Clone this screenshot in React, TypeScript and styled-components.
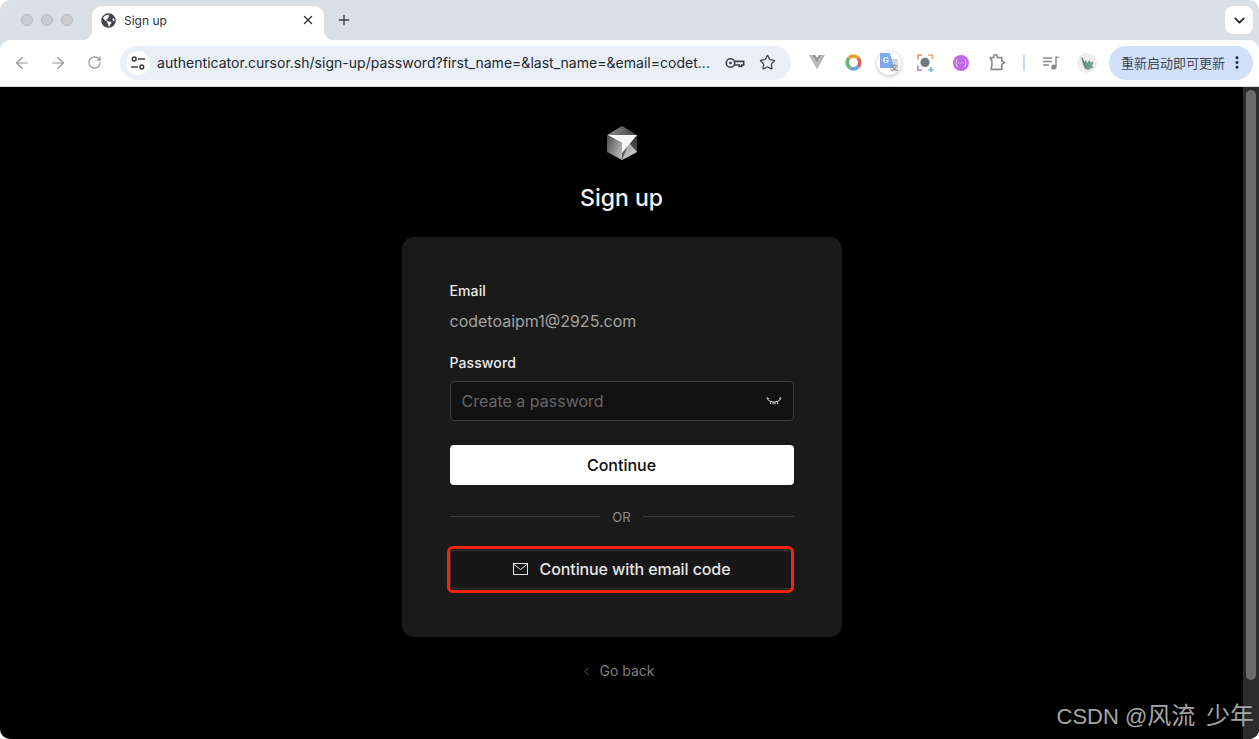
import * as React from 'react';

import styled, { createGlobalStyle } from 'styled-components';
import { ArrowLeft, ArrowRight, ChevronDown, ChevronLeft, EllipsisVertical, Plus, RotateCw, Star, X } from 'lucide-react';
import { FaGlobeAmericas } from 'react-icons/fa';

const GlobalStyle = createGlobalStyle`
  html, body {
    margin: 0;
    padding: 0;
    background-color: #fff;
  }

  body {
    font-family: Inter, "Liberation Sans", "Noto Sans CJK SC", sans-serif;
  }
`;

const Frame = styled.div`
  display: flex;
  flex-direction: column;
  position: relative;
  width: 1259px;
  height: 739px;
  overflow: hidden;
  border-radius: 10px;
  background-color: #d9e0e8;
`;

const TabStrip = styled.div`
  display: flex;
  align-items: flex-end;
  flex: 0 0 40px;
  box-sizing: border-box;
  padding: 0 6px 0 21px;
`;

const Dots = styled.div`
  display: flex;
  gap: 8px;
  align-self: center;
  margin-right: 19px;
`;

const Dot = styled.span`
  width: 12px;
  height: 12px;
  box-sizing: border-box;
  border: 1px solid #b5babf;
  border-radius: 50%;
  background-color: #c9cdd2;
`;

const Tab = styled.div`
  display: flex;
  align-items: center;
  position: relative;
  width: 232px;
  height: 34px;
  box-sizing: border-box;
  padding: 0 9px 6px;
  border-radius: 10px 10px 0 0;
  background-color: #fff;
  color: #3c4043;

  &::before,
  &::after {
    content: '';
    position: absolute;
    bottom: 0;
    width: 8px;
    height: 8px;
  }

  &::before {
    left: -8px;
    background: radial-gradient(circle at 0 0, transparent 7.5px, #fff 8px);
  }

  &::after {
    right: -8px;
    background: radial-gradient(circle at 100% 0, transparent 7.5px, #fff 8px);
  }
`;

const TabTitle = styled.span`
  flex: 1;
  margin-left: 8px;
  font-size: 12px;
  color: #2f3235;
`;

const NewTab = styled.div`
  display: flex;
  align-self: center;
  margin-left: 12px;
  color: #3c4043;
`;

const TabMenu = styled.div`
  display: flex;
  justify-content: center;
  align-items: center;
  align-self: flex-start;
  width: 28px;
  height: 28px;
  margin: 6px 0 0 auto;
  border-radius: 8px;
  background-color: #fff;
  color: #1f2328;
`;

const Toolbar = styled.div`
  display: flex;
  align-items: center;
  flex: 0 0 47px;
  box-sizing: border-box;
  padding: 0 6px 1px 4px;
  border-radius: 10px 10px 0 0;
  border-bottom: 1px solid #d5d8dc;
  background-color: #fff;
`;

const Slot = styled.div`
  display: flex;
  justify-content: center;
  align-items: center;
  width: 36px;
  height: 34px;
  color: #8f959b;
`;

const Omnibox = styled.div`
  display: flex;
  align-items: center;
  width: 671px;
  height: 34px;
  box-sizing: border-box;
  margin: 0 8px;
  padding: 0 15px 0 6px;
  border-radius: 17px;
  background-color: #e8eff9;
  color: #3c4043;
`;

const TuneButton = styled.div`
  display: flex;
  justify-content: center;
  align-items: center;
  width: 24px;
  height: 24px;
  border-radius: 50%;
  background-color: #fff;
`;

const Url = styled.span`
  flex: 1;
  margin-left: 7px;
  font-size: 14px;
  letter-spacing: 0.02px;
  color: #22262a;
  white-space: nowrap;
`;

const OmniAction = styled.div`
  display: flex;
  margin-left: 14px;
  color: #3c4043;
`;

const ToolDivider = styled.span`
  width: 2px;
  height: 16px;
  margin: 0 8px 0 8px;
  background-color: #c6d9f6;
`;

const UpdatePill = styled.div`
  display: flex;
  align-items: center;
  width: 144px;
  height: 34px;
  box-sizing: border-box;
  margin-left: 4px;
  padding: 0 8px 0 12px;
  border-radius: 17px;
  background-color: #d0e0fb;
  color: #444a52;
  font-family: "Noto Sans CJK SC", sans-serif;
  font-size: 13px;
  white-space: nowrap;

  svg {
    margin-left: 4px;
    color: #0f2a4a;
  }
`;

const Viewport = styled.div`
  display: flex;
  flex: 1;
  min-height: 0;
  background-color: #000;
`;

const Main = styled.main`
  display: flex;
  flex: 1;
  flex-direction: column;
  align-items: center;
  padding-top: 39px;
`;

const Scrollbar = styled.div`
  flex: 0 0 16px;
  box-sizing: border-box;
  padding: 3px 3px 59px 3px;
  background-color: #2b2b2b;
`;

const ScrollThumb = styled.div`
  height: 100%;
  border-radius: 5px;
  background-color: #6b6b6b;
`;

const Title = styled.h1`
  margin: 22px 0 23px;
  font-size: 23px;
  font-weight: 500;
  line-height: 32px;
  color: #f4f4f4;
`;

const Card = styled.section`
  display: flex;
  flex-direction: column;
  width: 440px;
  height: 400px;
  box-sizing: border-box;
  padding: 44px 48px 0;
  border-radius: 12px;
  background-color: #1a1a1a;
`;

const Label = styled.div`
  font-size: 14px;
  font-weight: 500;
  letter-spacing: 0.1px;
  line-height: 20px;
  color: #ededed;
`;

const EmailValue = styled.div`
  margin: 8px 0 20px;
  font-size: 16px;
  line-height: 24px;
  color: #a3a3a3;
`;

const InputBox = styled.div`
  display: flex;
  align-items: center;
  justify-content: space-between;
  height: 40px;
  box-sizing: border-box;
  margin-top: 8px;
  padding: 0 11px;
  border: 1px solid #3d3d3d;
  border-radius: 4px;
  background-color: #121212;
`;

const Placeholder = styled.span`
  font-size: 16px;
  color: #666;
`;

const PrimaryButton = styled.div`
  display: flex;
  justify-content: center;
  align-items: center;
  height: 40px;
  margin-top: 24px;
  border-radius: 4px;
  background-color: #fff;
  font-size: 16px;
  font-weight: 500;
  color: #0a0a0a;
`;

const OrRow = styled.div`
  display: flex;
  align-items: center;
  gap: 12px;
  height: 20px;
  margin: 22px 0 23px;
  font-size: 13px;
  color: #8c8c8c;

  &::before,
  &::after {
    content: '';
    flex: 1;
    height: 1px;
    margin-bottom: 2px;
    background-color: #3a3a3a;
  }
`;

const SecondaryButton = styled.div`
  display: flex;
  justify-content: center;
  align-items: center;
  gap: 12px;
  position: relative;
  height: 39px;
  box-sizing: border-box;
  padding-bottom: 1px;
  border: 1px solid #333;
  border-radius: 4px;
  background-color: #171717;
  font-size: 16px;
  font-weight: 500;
  letter-spacing: -0.1px;
  color: #e4e4e4;
`;

const RedMark = styled.span`
  position: absolute;
  top: -5px;
  right: -1px;
  bottom: -5px;
  left: -4px;
  border: 3px solid #f5230c;
  border-radius: 6px;
`;

const BackLink = styled.div`
  display: flex;
  align-items: center;
  gap: 6px;
  margin-top: 24px;
  padding-right: 8px;
  font-size: 14px;
  line-height: 20px;
  color: #7d7d7d;
`;

const Watermark = styled.div`
  position: absolute;
  right: 5px;
  bottom: 8px;
  font-family: "Liberation Sans", "Noto Sans CJK SC", sans-serif;
  font-size: 22px;
  line-height: 28px;
  color: #a6a6a6;
  white-space: nowrap;
`;

const WatermarkName = styled.span`
  font-size: 24px;
  word-spacing: 4px;
`;

const TuneIcon = () => (
  <svg width="16" height="16" viewBox="0 0 16 16" fill="none" stroke="#3c4043" strokeWidth="1.5">
    <circle cx="4.2" cy="4" r="1.9" />
    <path d="M8 4h7" />
    <path d="M1 12h7" />
    <circle cx="11.8" cy="12" r="1.9" />
  </svg>
);

const KeyIcon = () => (
  <svg width="20" height="12" viewBox="0 0 20 12" fill="none" stroke="#3c4043" strokeWidth="1.6">
    <circle cx="5.5" cy="6" r="4.2" />
    <circle cx="5.5" cy="6" r="1" fill="#3c4043" strokeWidth="0.8" />
    <path d="M9.7 4.4h9v3.6h-2v1.4h-2.4V8H9.7" />
  </svg>
);

const VueIcon = () => (
  <svg width="16" height="15" viewBox="0 0 16 15">
    <path d="M0 0h3.6L8 7.6 12.4 0H16L8 14.5z" fill="#b6b8ba" />
    <path d="M3.6 0h2.6L8 3.1 9.8 0h2.6L8 7.6z" fill="#8f9193" />
  </svg>
);

const RingIcon = () => (
  <svg width="17" height="17" viewBox="0 0 17 17" fill="none" strokeWidth="3.6">
    <path d="M4 4A6.4 6.4 0 0 1 13 4" stroke="#e8a33d" />
    <path d="M13 4A6.4 6.4 0 0 1 13 13" stroke="#d9695f" />
    <path d="M13 13A6.4 6.4 0 0 1 5.4 14" stroke="#6aa5e8" />
    <path d="M5.4 14A6.4 6.4 0 0 1 4 4" stroke="#68b36f" />
  </svg>
);

const TranslateIcon = () => (
  <svg width="26" height="26" viewBox="0 0 26 26" style={{ filter: 'drop-shadow(0 1px 2px rgba(0,0,0,0.28))' }}>
    <circle cx="13" cy="13" r="12" fill="#fff" />
    <path d="M12 9h10v12H14z" fill="#d5d7d9" />
    <path d="M4 3h10l4 15H4z" fill="#7fa8ef" />
    <text x="7" y="13" fontSize="8" fontWeight="700" fill="#fff" fontFamily="Inter, sans-serif">G</text>
    <text x="15" y="20" fontSize="7" fill="#777" fontFamily="'Noto Sans CJK SC', sans-serif">文</text>
  </svg>
);

const LensIcon = () => (
  <svg width="17" height="18" viewBox="0 0 17 18" fill="none" strokeWidth="1.8">
    <path d="M.9 5.5V1.2H5" stroke="#e99a8f" />
    <path d="M11 1.2h4.4V5.5" stroke="#eeb27c" />
    <path d="M.9 11.5v4.6H5" stroke="#c58be0" />
    <path d="M11.5 15.8h5M14 13v5" stroke="#6fc2e6" />
    <circle cx="8" cy="8.4" r="4.6" fill="#73787e" />
  </svg>
);

const PurpleIcon = () => (
  <svg width="16" height="16" viewBox="0 0 16 16" fill="none">
    <circle cx="8" cy="8" r="8" fill="#bf65ea" />
    <path d="M4.6 4.2C3 4.2 4 8 2.6 8c1.4 0 .4 3.8 2 3.8M11.4 4.2c1.6 0 .6 3.8 2 3.8-1.4 0-.4 3.8-2 3.8" stroke="#f6e6fc" strokeWidth="1" />
    <path d="M5.5 8h1M7.5 8h1M9.5 8h1" stroke="#f6e6fc" strokeWidth="1.2" />
  </svg>
);

const PuzzleIcon = () => (
  <svg width="17" height="17" viewBox="0 0 17 17" fill="none" stroke="#85898e" strokeWidth="1.6" strokeLinejoin="round">
    <path d="M1.2 3.6h3.6V2.4a1.7 1.7 0 0 1 3.4 0v1.2h4.6v3.2l2.8 1.8-2.8 1.8v5H2l.9-4.2V7.2z" />
  </svg>
);

const QueueIcon = () => (
  <svg width="16" height="14" viewBox="0 0 16 14" fill="none">
    <path d="M0 2h9M0 5.5h9M0 9h6" stroke="#85898e" strokeWidth="1.3" />
    <path d="M13 11V1.2h2.6" stroke="#85898e" strokeWidth="1.4" />
    <circle cx="10.8" cy="11" r="2.6" fill="#85898e" />
  </svg>
);

const AvatarIcon = () => (
  <svg width="20" height="20" viewBox="0 0 20 20">
    <circle cx="10" cy="10" r="10" fill="#ececec" />
    <path d="M4 4l3 5 2-2 1 3 2.5-3 1 2.5 3-1-1.5 4.5 2 2-3.5.2-2 1.8-3.5-1.2-2-4.5z" fill="#6f9e86" />
    <path d="M5 4.5L9 15" stroke="#4c7f68" strokeWidth="1" />
  </svg>
);

const ClosedEyeIcon = () => (
  <svg width="16" height="8" viewBox="0 0 16 8" fill="none" stroke="#f2f2f2" strokeWidth="0.9">
    <path d="M.5 1.2C3 4.2 5.6 5 8 5s5-.8 7.5-3.8" />
    <path d="M1 .5l2 1.6M15 .5l-2 1.6M5 4.4L4.4 7M11 4.4L11.6 7M7 5v2.4M9 5v2.4" />
  </svg>
);

const MailIcon = () => (
  <svg width="15" height="12" viewBox="0 0 15 12" fill="none" stroke="#e4e4e4" strokeWidth="1">
    <rect x="0.5" y="0.5" width="14" height="11" />
    <path d="M.5 1l7 5.5 7-5.5" />
  </svg>
);

const CursorLogo = () => (
  <svg width="30" height="34" viewBox="0 0 30 34">
    <defs>
      <linearGradient id="leftFace" x1="0" y1="0" x2="1" y2="0.6">
        <stop offset="0" stopColor="#4d4d4d" />
        <stop offset="1" stopColor="#b4b4b4" />
      </linearGradient>
      <linearGradient id="rightFace" x1="1" y1="0" x2="0" y2="1">
        <stop offset="0" stopColor="#333" />
        <stop offset="1" stopColor="#6a6a6a" />
      </linearGradient>
      <linearGradient id="topFace" x1="0" y1="0" x2="1" y2="0">
        <stop offset="0" stopColor="#8e8e8e" />
        <stop offset="1" stopColor="#3d3d3d" />
      </linearGradient>
      <linearGradient id="spark" x1="0" y1="0" x2="1" y2="1">
        <stop offset="0" stopColor="#9a9a9a" />
        <stop offset="1" stopColor="#d8d8d8" />
      </linearGradient>
    </defs>
    <path d="M15 0L30 9 15 17 0 9z" fill="url(#topFace)" />
    <path d="M0 9L15 17V34L0 26z" fill="url(#leftFace)" />
    <path d="M30 9L15 17V34L30 26z" fill="url(#rightFace)" />
    <path d="M15 34L30 26 22 17z" fill="url(#spark)" />
    <path d="M1 9H30L15 27V17z" fill="#f6f6f6" />
  </svg>
);

const App = () => (
  <>
    <GlobalStyle />
    <Frame>
      <TabStrip>
        <Dots>
          <Dot />
          <Dot />
          <Dot />
        </Dots>
        <Tab>
          <FaGlobeAmericas size={15} color="#43474c" />
          <TabTitle>Sign up</TabTitle>
          <X size={14} strokeWidth={2.4} color="#2f3235" />
        </Tab>
        <NewTab>
          <Plus size={16} strokeWidth={2} />
        </NewTab>
        <TabMenu>
          <ChevronDown size={17} strokeWidth={2.4} />
        </TabMenu>
      </TabStrip>
      <Toolbar>
        <Slot><ArrowLeft size={18} strokeWidth={1.6} /></Slot>
        <Slot><ArrowRight size={18} strokeWidth={1.6} /></Slot>
        <Slot><RotateCw size={15} strokeWidth={1.8} /></Slot>
        <Omnibox>
          <TuneButton><TuneIcon /></TuneButton>
          <Url>authenticator.cursor.sh/sign-up/password?first_name=&amp;last_name=&amp;email=codet...</Url>
          <OmniAction><KeyIcon /></OmniAction>
          <OmniAction><Star size={17} strokeWidth={1.7} /></OmniAction>
        </Omnibox>
        <Slot><VueIcon /></Slot>
        <Slot><RingIcon /></Slot>
        <Slot><TranslateIcon /></Slot>
        <Slot><LensIcon /></Slot>
        <Slot><PurpleIcon /></Slot>
        <Slot><PuzzleIcon /></Slot>
        <ToolDivider />
        <Slot><QueueIcon /></Slot>
        <Slot><AvatarIcon /></Slot>
        <UpdatePill>
          重新启动即可更新
          <EllipsisVertical size={17} strokeWidth={2.4} />
        </UpdatePill>
      </Toolbar>
      <Viewport>
        <Main>
          <CursorLogo />
          <Title>Sign up</Title>
          <Card>
            <Label>Email</Label>
            <EmailValue>codetoaipm1@2925.com</EmailValue>
            <Label>Password</Label>
            <InputBox>
              <Placeholder>Create a password</Placeholder>
              <ClosedEyeIcon />
            </InputBox>
            <PrimaryButton>Continue</PrimaryButton>
            <OrRow>OR</OrRow>
            <SecondaryButton>
              <MailIcon />
              Continue with email code
              <RedMark />
            </SecondaryButton>
          </Card>
          <BackLink>
            <ChevronLeft size={13} strokeWidth={1.4} />
            Go back
          </BackLink>
        </Main>
        <Scrollbar>
          <ScrollThumb />
        </Scrollbar>
      </Viewport>
      <Watermark>CSDN @<WatermarkName>风流 少年</WatermarkName></Watermark>
    </Frame>
  </>
);

export default App;
